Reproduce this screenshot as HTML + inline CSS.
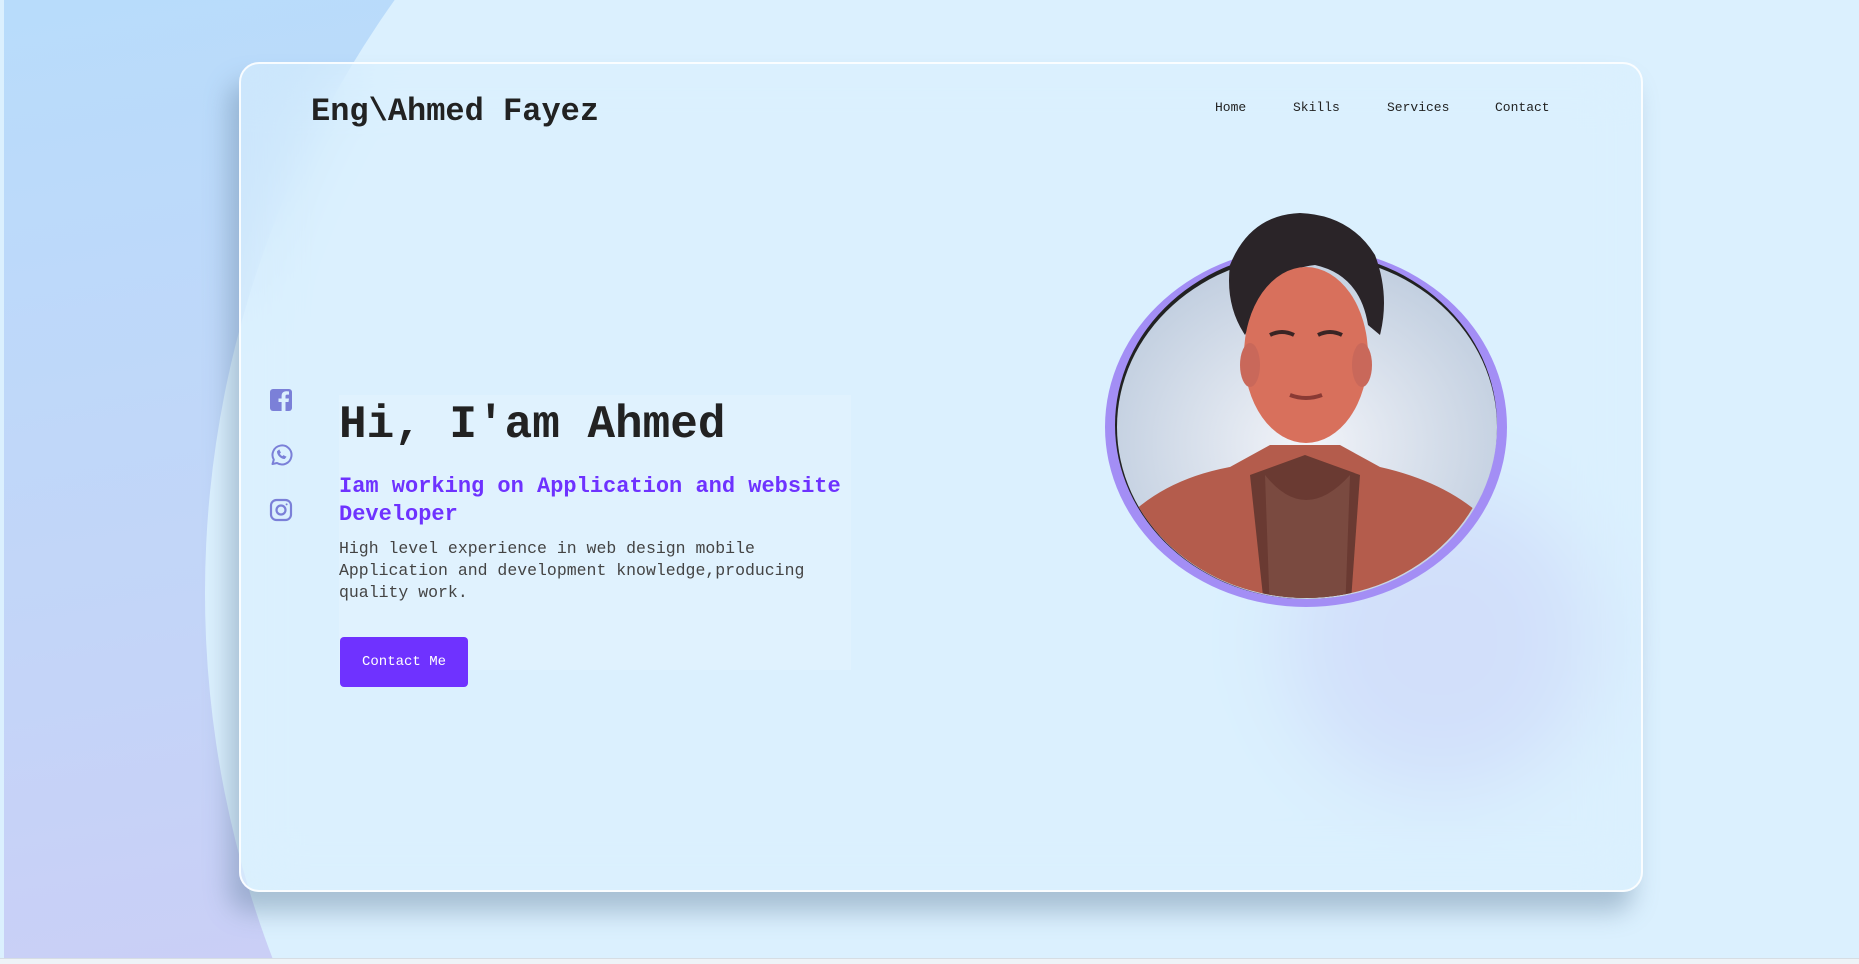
<!DOCTYPE html>
<html><head><meta charset="utf-8"><style>
html,body{margin:0;padding:0;width:1859px;height:964px;overflow:hidden;background:#dbf0fe;font-family:"Liberation Mono","DejaVu Sans Mono",monospace;}
.page{position:absolute;left:4px;top:0;width:1855px;height:958px;background:linear-gradient(170deg,#b8dcfb 0%,#c3d5f8 50%,#cfcaf5 100%);overflow:hidden;}
.bigc{position:absolute;left:201px;top:-429px;width:2044px;height:2044px;border-radius:50%;background:#dbf0fe;}
.bottom{position:absolute;left:0;top:958px;width:1859px;height:6px;background:#eef3f7;border-top:1px solid #d6dde3;box-sizing:border-box;}
.card{position:absolute;left:239px;top:62px;width:1400px;height:826px;border:2px solid rgba(255,255,255,.85);border-radius:20px;background:rgba(219,241,254,.55);backdrop-filter:blur(30px);-webkit-backdrop-filter:blur(30px);box-shadow:-10px 20px 25px rgba(90,120,150,.4);}
.logo{position:absolute;left:311px;top:93px;font-size:32px;font-weight:bold;color:#222;}
.nav{position:absolute;top:100px;font-size:13px;color:#222;}
.box{position:absolute;left:339px;top:395px;width:512px;height:275px;background:rgba(235,246,255,.35);}
h1{position:absolute;left:339px;top:397px;margin:0;font-size:46px;font-weight:bold;color:#222;line-height:56px;}
.sub{position:absolute;left:339px;top:473px;width:540px;font-size:22px;font-weight:bold;color:#6e32ff;line-height:28px;}
.p{position:absolute;left:339px;top:538px;width:520px;font-size:16.5px;color:#444;line-height:22px;}
.btn{position:absolute;left:340px;top:637px;width:128px;height:50px;background:#6f32ff;border-radius:4px;color:#fff;font-size:14px;line-height:50px;text-align:center;}
.blob{position:absolute;left:1285px;top:485px;width:310px;height:310px;border-radius:50%;background:#c5c8f7;filter:blur(30px);opacity:.9;}
.ic{position:absolute;left:269px;width:24px;height:24px;}
</style></head><body>
<div class="page"><div class="bigc"></div></div>
<div class="bottom"></div>
<div class="blob"></div>
<div class="card"></div>
<div class="logo">Eng\Ahmed Fayez</div>
<div class="nav" style="left:1215px">Home</div>
<div class="nav" style="left:1293px">Skills</div>
<div class="nav" style="left:1387px">Services</div>
<div class="nav" style="left:1495px">Contact</div>

<svg class="ic" style="top:388px" viewBox="0 0 24 24"><rect x="1" y="1" width="22" height="22" rx="3" fill="#7b80d8"/><path d="M16.5 23V14h3l.5-3.5h-3.5V8.3c0-1 .3-1.7 1.8-1.7H20V3.5c-.4 0-1.5-.2-2.8-.2-2.8 0-4.6 1.7-4.6 4.8v2.4H9.5V14h3.1v9z" fill="#dbf0fe"/></svg>
<svg class="ic" style="top:443px" viewBox="0 0 24 24" fill="none" stroke="#7b80d8" stroke-width="2"><path d="M3.5 21l1.3-4.3A9.5 9.5 0 1 1 8 20z" stroke-linejoin="round"/><path d="M8.5 8.5c0 3.5 3.5 7 7 7l1.3-1.6-2.3-1.2-1 1c-1.4-.5-2.7-1.8-3.2-3.2l1-1-1.2-2.3z" fill="#7b80d8" stroke-width="1"/></svg>
<svg class="ic" style="top:498px" viewBox="0 0 24 24" fill="none" stroke="#7b80d8" stroke-width="2.2"><rect x="2" y="2" width="20" height="20" rx="5.5"/><circle cx="12" cy="12" r="4.5"/><circle cx="17.6" cy="6.4" r="1" fill="#7b80d8" stroke="none"/></svg>

<div class="box"></div>
<h1>Hi, I'am Ahmed</h1>
<div class="sub">Iam working on Application and website Developer</div>
<div class="p">High level experience in web design mobile Application and development knowledge,producing quality work.</div>
<div class="btn">Contact Me</div>

<svg style="position:absolute;left:1100px;top:205px" width="420" height="410" viewBox="0 0 420 410">
<defs>
<radialGradient id="bg" cx="50%" cy="55%" r="55%"><stop offset="0" stop-color="#f2f4f9"/><stop offset="1" stop-color="#c2cfe0"/></radialGradient>
<clipPath id="cl"><ellipse cx="206" cy="220" rx="190" ry="173"/></clipPath>
</defs>
<ellipse cx="206" cy="222" rx="201" ry="180" fill="#a38ef5"/>
<ellipse cx="206" cy="220" rx="191" ry="174" fill="#222"/>
<ellipse cx="207" cy="222" rx="190" ry="172" fill="url(#bg)"/>
<g clip-path="url(#cl)">
<path d="M20 320 Q60 275 130 262 L170 240 L240 240 L280 262 Q360 280 400 330 L400 410 L20 410z" fill="#b45c4c"/>
<path d="M150 270 L205 250 L260 270 L250 410 L165 410z" fill="#6a3a32"/>
<path d="M165 270 Q205 320 250 270 L245 410 L170 410z" fill="#7a4a40"/>
</g>
<path d="M130 60 Q150 10 200 8 Q250 10 275 50 Q290 90 280 130 L268 120 Q260 70 215 60 Q170 65 155 110 L145 130 Q125 100 130 60z" fill="#2a2428"/>
<ellipse cx="206" cy="150" rx="62" ry="88" fill="#d8705c"/>
<ellipse cx="150" cy="160" rx="10" ry="22" fill="#c9685a"/>
<ellipse cx="262" cy="160" rx="10" ry="22" fill="#c9685a"/>
<path d="M170 130 Q182 124 194 130 M218 130 Q230 124 242 130" stroke="#3a2424" stroke-width="4" fill="none"/>
<path d="M190 190 Q206 196 222 190" stroke="#8a3a34" stroke-width="4" fill="none"/>
</svg>
</body></html>
